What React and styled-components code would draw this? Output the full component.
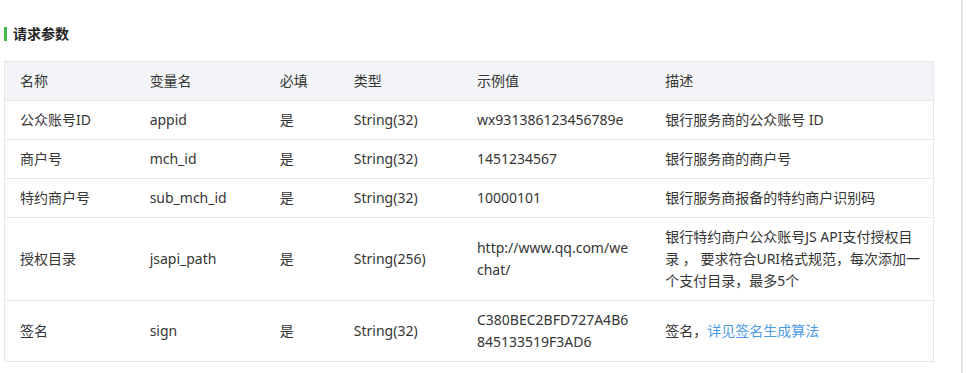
import styled, { createGlobalStyle } from "styled-components";

const GlobalStyle = createGlobalStyle`
  body {
    margin: 0;
    background: #fff;
    font-family: "Noto Sans", "Noto Sans CJK SC", sans-serif;
  }
`;

const Page = styled.div`
  width: 963px;
  height: 373px;
  border-right: 2px solid #e6e6e6;
  padding: 25px 0 0 4px;
  box-sizing: border-box;
`;

const Title = styled.h3`
  margin: 0 0 19px;
  display: flex;
  align-items: center;
  gap: 6px;
  font-size: 14px;
  font-weight: 700;
  line-height: 17px;
  color: #222;
  &::before {
    content: "";
    width: 3px;
    height: 14px;
    background: #3fbb4b;
  }
`;

const Table = styled.table`
  width: 930px;
  border-collapse: collapse;
  table-layout: fixed;
  border: 1px solid #e6e7eb;
  font-size: 14px;
  line-height: 22px;
  color: #353535;
`;

const Th = styled.th`
  background: #f3f4f7;
  font-weight: 400;
  text-align: left;
  padding: 8px 15px;
  border-bottom: 1px solid #e6e7eb;
`;

const Td = styled.td`
  padding: 8px ${(p) => p.$padRight}px 8px 15px;
  border-bottom: 1px solid #e6e7eb;
  vertical-align: middle;
  word-break: ${(p) => (p.$break ? "break-all" : "normal")};
`;

const Link = styled.a`
  color: #4d9be6;
  text-decoration: none;
`;

const cols = [
  { name: "名称", w: 130, pr: 15 },
  { name: "变量名", w: 130, pr: 15 },
  { name: "必填", w: 74, pr: 15 },
  { name: "类型", w: 123, pr: 15 },
  { name: "示例值", w: 188, pr: 19 },
  { name: "描述", w: 283, pr: 10 },
];

const rows = [
  ["公众账号ID", "appid", "是", "String(32)", "wx931386123456789e", "银行服务商的公众账号 ID"],
  ["商户号", "mch_id", "是", "String(32)", "1451234567", "银行服务商的商户号"],
  ["特约商户号", "sub_mch_id", "是", "String(32)", "10000101", "银行服务商报备的特约商户识别码"],
  [
    "授权目录",
    "jsapi_path",
    "是",
    "String(256)",
    "http://www.qq.com/wechat/",
    "银行特约商户公众账号JS API支付授权目录 ， 要求符合URI格式规范，每次添加一个支付目录，最多5个",
  ],
  [
    "签名",
    "sign",
    "是",
    "String(32)",
    "C380BEC2BFD727A4B6845133519F3AD6",
    <>
      签名，<Link href="#">详见签名生成算法</Link>
    </>,
  ],
];

export default function App() {
  return (
    <>
      <GlobalStyle />
      <Page>
        <Title>请求参数</Title>
        <Table>
          <colgroup>
            {cols.map((c) => (
              <col key={c.name} style={{ width: c.w }} />
            ))}
          </colgroup>
          <thead>
            <tr>
              {cols.map((c) => (
                <Th key={c.name}>{c.name}</Th>
              ))}
            </tr>
          </thead>
          <tbody>
            {rows.map((r) => (
              <tr key={r[1]}>
                {r.map((cell, i) => (
                  <Td key={i} $break={i === 4} $padRight={cols[i].pr}>
                    {cell}
                  </Td>
                ))}
              </tr>
            ))}
          </tbody>
        </Table>
      </Page>
    </>
  );
}
